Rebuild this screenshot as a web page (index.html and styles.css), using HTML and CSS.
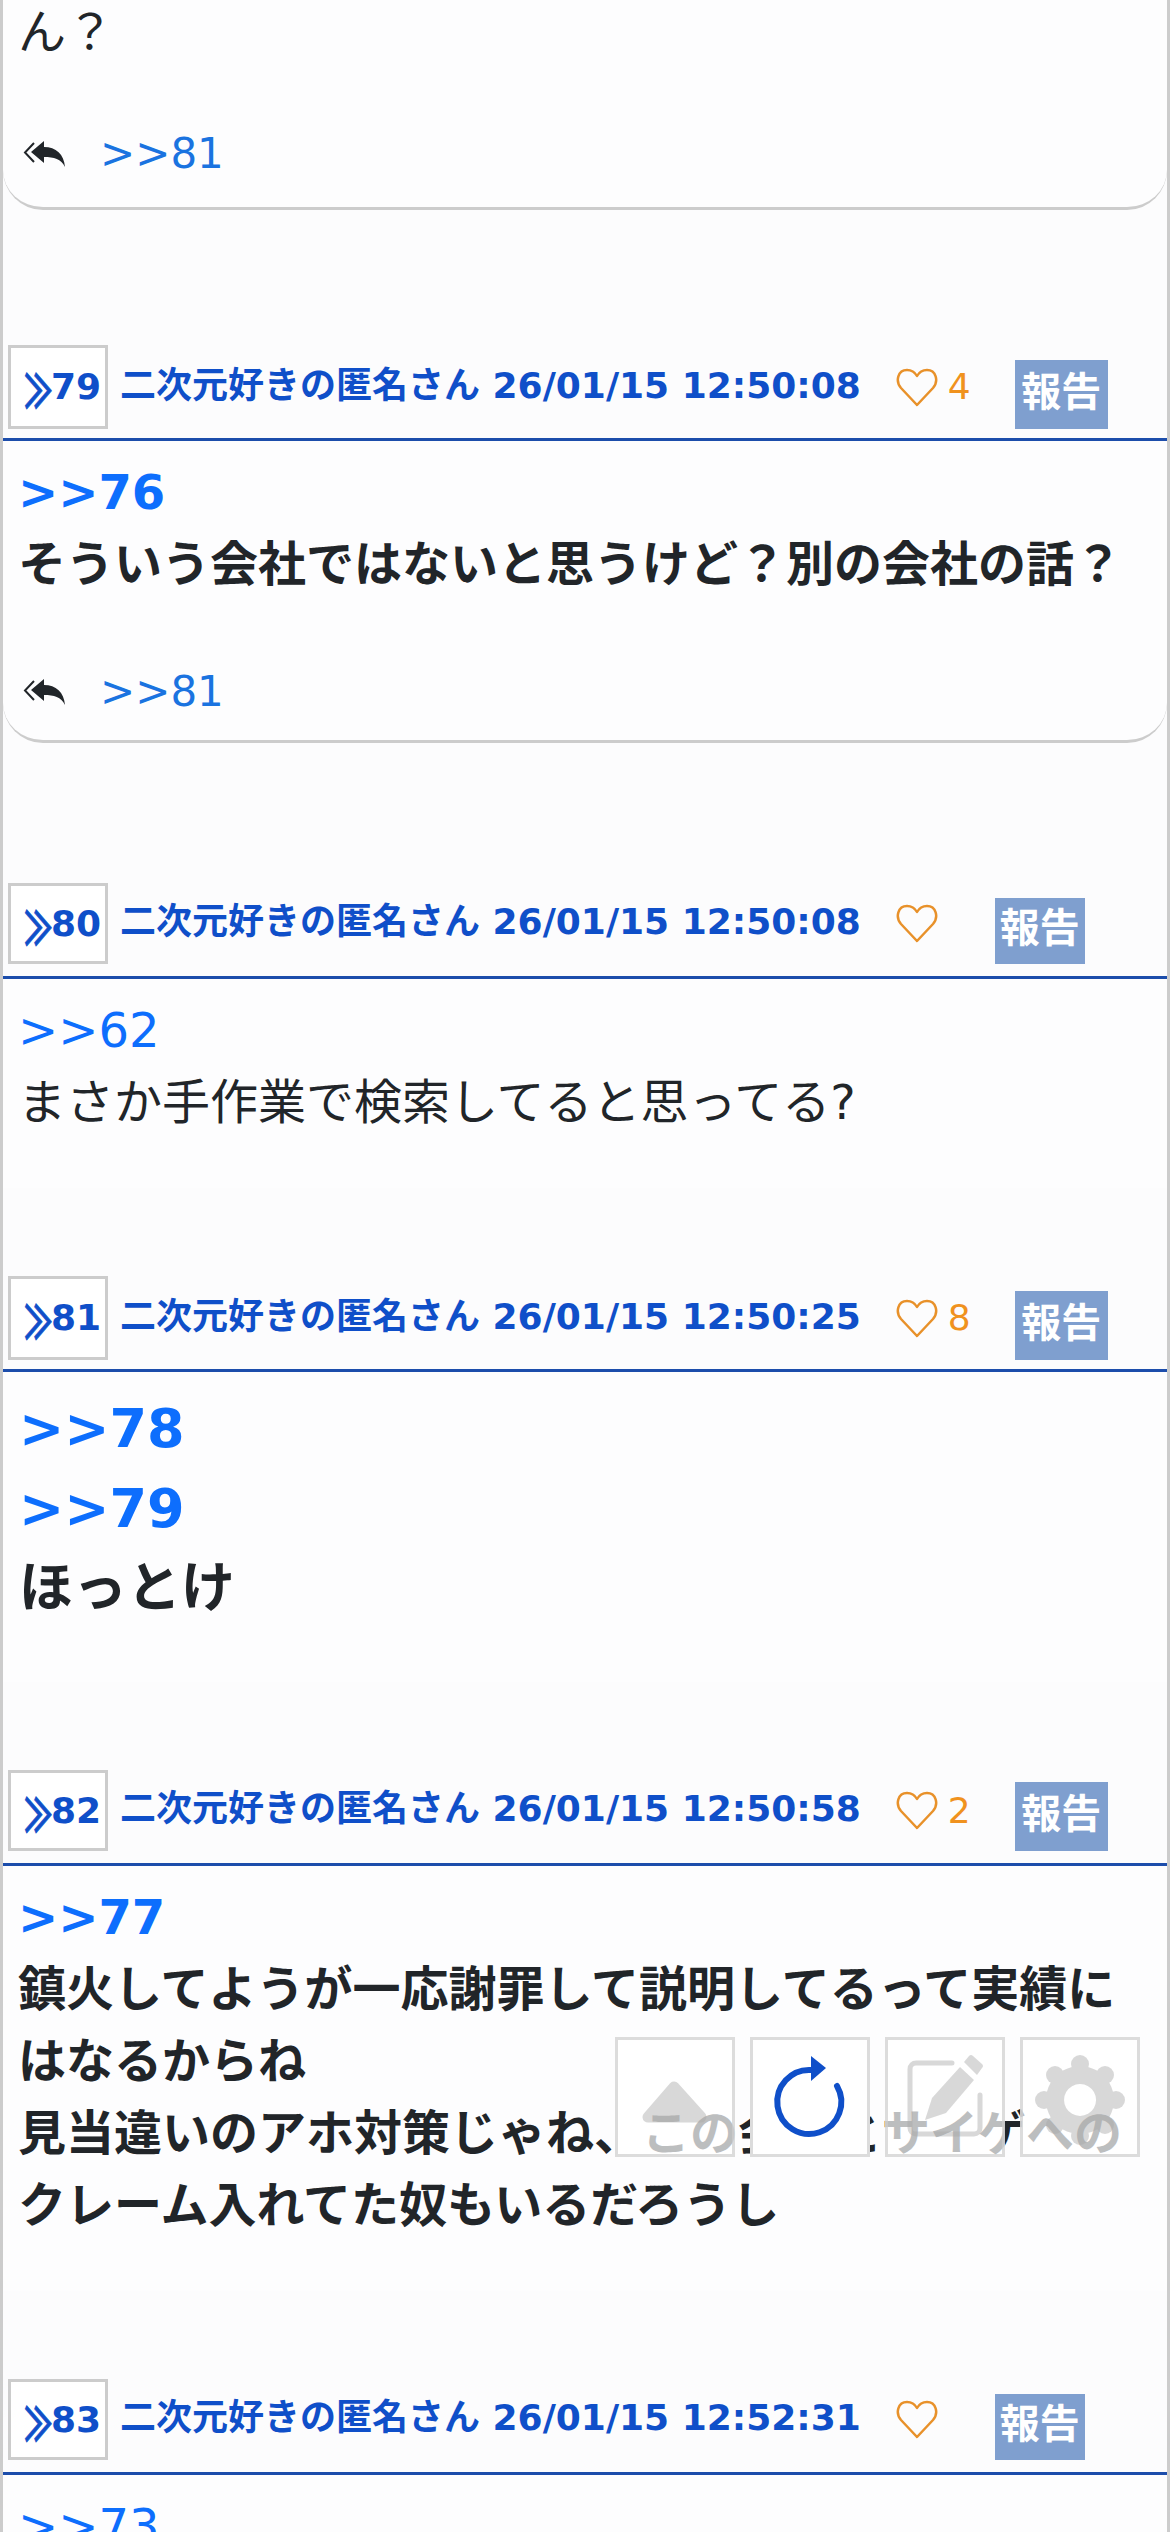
FILE: index.html
```html
<!doctype html>
<html lang="ja">
 <head>
  <title>二次元好きの匿名さん</title>
  <meta name="viewport" content="width=device-width, initial-scale=1">
  <link rel="stylesheet" href="styles.css">
 </head>
 <body>
  <svg class="defs">
   <symbol id="reply-all" viewBox="0 0 42 26">
    <path d="M11 2 L2 11.5 L11 21" fill="none" stroke="currentColor" stroke-width="2"/>
    <path d="M21 0 L21 6 C33 6 41 13 42 26 C38 18 31 16 21 16 L21 22 L8 11 Z" fill="currentColor"/>
   </symbol>
   <symbol id="heart" viewBox="0 0 42 39">
    <path d="M21 37 L5 20 C-1 13 2 2 11 2 C15.5 2 19 4.5 21 8 C23 4.5 26.5 2 31 2 C40 2 43 13 37 20 Z" fill="none" stroke="currentColor" stroke-width="2.5" stroke-linejoin="round"/>
   </symbol>
  </svg>

  <main class="thread">
   <section class="post">
    <div class="res-body res-card res-first">
     <p>ん？</p>
     <div class="reply-row">
      <svg class="reply-icon"><use href="#reply-all"/></svg>
      <a class="anchor" href="#">&gt;&gt;81</a>
     </div>
    </div>
   </section>

   <section class="post">
    <header class="res-head res-head-tall">
     <a class="res-num" href="#"><span class="mark">≫</span>79</a>
     <span class="res-meta">二次元好きの匿名さん 26/01/15 12:50:08</span>
     <svg class="like"><use href="#heart"/></svg>
     <span class="like-count">4</span>
     <button class="report report-big">報告</button>
    </header>
    <div class="res-body res-card">
     <p class="strong"><a class="anchor" href="#">&gt;&gt;76</a><br>そういう会社ではないと思うけど？別の会社の話？</p>
     <div class="reply-row">
      <svg class="reply-icon"><use href="#reply-all"/></svg>
      <a class="anchor" href="#">&gt;&gt;81</a>
     </div>
    </div>
   </section>

   <section class="post">
    <header class="res-head">
     <a class="res-num" href="#"><span class="mark">≫</span>80</a>
     <span class="res-meta">二次元好きの匿名さん 26/01/15 12:50:08</span>
     <svg class="like"><use href="#heart"/></svg>
     <span class="like-count"></span>
     <button class="report">報告</button>
    </header>
    <div class="res-body">
     <p><a class="anchor" href="#">&gt;&gt;62</a><br>まさか手作業で検索してると思ってる?</p>
    </div>
   </section>

   <section class="post">
    <header class="res-head res-head-tall">
     <a class="res-num" href="#"><span class="mark">≫</span>81</a>
     <span class="res-meta">二次元好きの匿名さん 26/01/15 12:50:25</span>
     <svg class="like"><use href="#heart"/></svg>
     <span class="like-count">8</span>
     <button class="report report-big">報告</button>
    </header>
    <div class="res-body res-body-larger">
     <p class="strong larger"><a class="anchor" href="#">&gt;&gt;78</a><br><a class="anchor" href="#">&gt;&gt;79</a><br>ほっとけ</p>
    </div>
   </section>

   <section class="post">
    <header class="res-head">
     <a class="res-num" href="#"><span class="mark">≫</span>82</a>
     <span class="res-meta">二次元好きの匿名さん 26/01/15 12:50:58</span>
     <svg class="like"><use href="#heart"/></svg>
     <span class="like-count">2</span>
     <button class="report report-big">報告</button>
    </header>
    <div class="res-body">
     <p class="strong"><a class="anchor" href="#">&gt;&gt;77</a><br>鎮火してようが一応謝罪して説明してるって実績にはなるからね<br>見当違いのアホ対策じゃね、この会社とサイゲへのクレーム入れてた奴もいるだろうし</p>
    </div>
   </section>

   <section class="post">
    <header class="res-head">
     <a class="res-num" href="#"><span class="mark">≫</span>83</a>
     <span class="res-meta">二次元好きの匿名さん 26/01/15 12:52:31</span>
     <svg class="like"><use href="#heart"/></svg>
     <span class="like-count"></span>
     <button class="report">報告</button>
    </header>
    <div class="res-body">
     <p><a class="anchor" href="#">&gt;&gt;73</a></p>
    </div>
   </section>
  </main>

  <nav class="float-bar">
   <button class="float-btn">
    <svg viewBox="0 0 114 114"><g class="dim"><path d="M56 47 L30 77 H83 Z" stroke="#aaa" stroke-width="11" stroke-linejoin="round"/></g></svg>
   </button>
   <button class="float-btn float-solid">
    <svg viewBox="0 0 114 114">
     <path d="M58 30 A32 32 0 1 0 84 46" fill="none" stroke="#0f4fc9" stroke-width="6" stroke-linecap="round"/>
     <path d="M58 16 L73 28 L58 41 Z" fill="#0f4fc9"/>
    </svg>
   </button>
   <button class="float-btn">
    <svg viewBox="0 0 114 114"><g class="dim">
     <path d="M64 23 H28 a6 6 0 0 0 -6 6 V88 a6 6 0 0 0 6 6 H86 a6 6 0 0 0 6 -6 V55" fill="none" stroke="#aaa" stroke-width="5" stroke-linecap="round"/>
     <path d="M37 80 L44 58 L72 27 L86 40 L58 73 Z"/>
     <path d="M76 22 L81 16 Q83 14 85 16 L94 24 Q96 26 94 28 L89 35 Z"/>
    </g></svg>
   </button>
   <button class="float-btn">
    <svg viewBox="0 0 114 114"><g class="dim" transform="translate(0 3)">
     <path fill-rule="evenodd" d="M57 23 A34 34 0 1 1 56.9 23 Z M57 41 A16 16 0 1 0 57.1 41 Z"/>
     <circle cx="57" cy="21" r="9"/><circle cx="82" cy="32" r="9"/><circle cx="93" cy="57" r="9"/><circle cx="82" cy="82" r="9"/>
     <circle cx="57" cy="93" r="9"/><circle cx="32" cy="82" r="9"/><circle cx="21" cy="57" r="9"/><circle cx="32" cy="32" r="9"/>
    </g></svg>
   </button>
  </nav>
 </body>
</html>
```

FILE: styles.css
```css
html, body {
 height: 2532px;
 overflow: hidden;
}
body {
 margin: 0;
 background-color: #fcfcfd;
 color: #212529;
 font-family: "DejaVu Sans", "Noto Sans CJK JP", sans-serif;
 font-size: 48px;
 line-height: 72px;
}
a {
 color: inherit;
 text-decoration: none;
}
p {
 margin: 0;
}
.defs {
 display: none;
}
.thread {
 margin-top: -19px;
 border-left: 3px solid #ccc;
 border-right: 3px solid #ccc;
}
.res-head {
 display: flex;
 align-items: center;
 padding: 88px 0 12px 5px;
 border-bottom: 3px solid #1c4dab;
 color: #0f4fc9;
 font-size: 36px;
 font-weight: bold;
 line-height: 54px;
}
.res-head-tall {
 padding-bottom: 9px;
}
.res-num {
 display: flex;
 align-items: center;
 justify-content: center;
 box-sizing: border-box;
 width: 100px;
 height: 81px;
 padding-left: 6px;
 border: 3px solid #ccc;
 background-color: #fff;
 white-space: nowrap;
}
.res-head-tall .res-num {
 height: 84px;
}
.mark {
 display: inline-block;
 width: 29px;
 margin-right: 1px;
 font-family: "Noto Sans CJK JP", sans-serif;
 text-align: center;
 transform: scale(0.78, 1.3);
 -webkit-text-stroke: 0.7px #0f4fc9;
}
.res-meta {
 margin-left: 12px;
 margin-bottom: 3px;
 white-space: nowrap;
}
.like {
 width: 42px;
 height: 39px;
 margin-left: 35px;
 color: #e8912a;
}
.like-count {
 margin-left: 10px;
 color: #f0921e;
 font-weight: normal;
}
.report {
 align-self: flex-end;
 width: 90px;
 height: 66px;
 margin-left: 47px;
 padding: 0 0 6px;
 border: none;
 background-color: #7f9fcf;
 color: #fff;
 font-family: inherit;
 font-size: 40px;
 font-weight: bold;
 line-height: 56px;
}
.report-big {
 width: 93px;
 height: 69px;
 margin-left: 44px;
}
.res-body {
 padding: 15px 15px 50px;
 background-color: #fdfdfe;
}
.res-body-larger {
 padding: 17px 15px 53px 16px;
}
.res-card {
 margin-bottom: 52px;
 padding-bottom: 18px;
 border-bottom: 3px solid #ccc;
 border-radius: 0 0 40px 40px;
}
.res-first {
 margin-bottom: 47px;
 padding-bottom: 23px;
}
.strong {
 font-weight: bold;
}
.larger {
 font-size: 54px;
 line-height: 80px;
}
.anchor {
 color: #0d6efd;
}
.reply-row {
 display: flex;
 align-items: center;
 margin-top: 56px;
 font-size: 42px;
 line-height: 60px;
}
.strong + .reply-row {
 margin-top: 62px;
}
.reply-row .anchor {
 margin-left: 35px;
 color: #1a73e0;
}
.reply-icon {
 width: 42px;
 height: 26px;
 margin-left: 5px;
 color: #212529;
}
.float-bar {
 position: fixed;
 top: 2037px;
 left: 615px;
 display: flex;
 gap: 15px;
}
.float-btn {
 width: 120px;
 height: 120px;
 padding: 0;
 border: 3px solid rgba(205, 205, 205, 0.7);
 background-color: rgba(255, 255, 255, 0.7);
}
.float-btn svg {
 display: block;
 width: 114px;
 height: 114px;
}
.float-solid {
 background-color: #fff;
}
.dim {
 fill: #aaa;
 opacity: 0.45;
}
```
